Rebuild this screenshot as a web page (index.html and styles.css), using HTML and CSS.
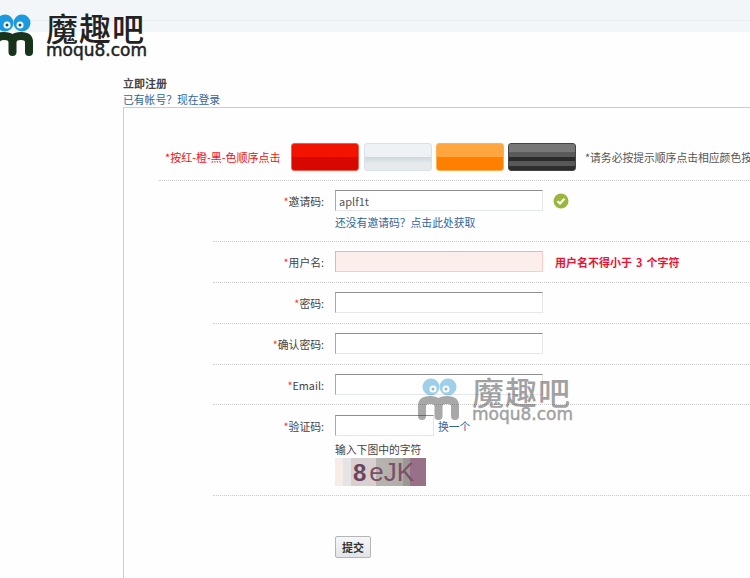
FILE: index.html
```html
<!DOCTYPE html>
<html lang="zh-CN">
<head>
    <meta charset="UTF-8">
    <title>立即注册 - 魔趣吧</title>
    <link rel="stylesheet" href="styles.css">
</head>
<body>

    <div class="topbar"></div>

    <div class="brand brand-top">
        <svg class="mascot" width="41" height="46" viewBox="0 0 41 46">
            <circle cx="13" cy="11" r="8.5" fill="#1b9ae0"/>
            <circle cx="30" cy="11" r="8.5" fill="#1b9ae0"/>
            <circle cx="15" cy="13" r="3.5" fill="#fff"/>
            <circle cx="28" cy="13" r="3.5" fill="#fff"/>
            <circle cx="15" cy="13" r="1.5" fill="#12507a"/>
            <circle cx="28" cy="13" r="1.5" fill="#12507a"/>
            <path d="M4 40V30Q4 24 12 24Q20.500 24 20.500 31V40M20.500 31Q20.500 24 29 24Q37 24 37 30V40" fill="none" stroke="#17331a" stroke-width="8" stroke-linecap="round"/>
        </svg>
        <div class="brand-text">
            <div class="brand-name">魔趣吧</div>
            <div class="brand-url">moqu8.com</div>
        </div>
    </div>

    <div class="content">
        <h3 class="title">立即注册</h3>
        <a class="link" href="#">已有帐号？现在登录</a>

        <div class="panel">
            <div class="color-row">
                <span class="color-tip">*按红-橙-黑-色顺序点击</span>
                <div class="color-btn btn-red"></div>
                <div class="color-btn btn-white"></div>
                <div class="color-btn btn-orange"></div>
                <div class="color-btn btn-black"></div>
                <span class="color-note">*请务必按提示顺序点击相应颜色按钮</span>
            </div>

            <div class="field field-invite">
                <label><em>*</em>邀请码:</label>
                <div class="control">
                    <div class="control-line">
                        <input class="text-input" type="text" value="aplf1t">
                        <svg class="ok-icon" width="16" height="16" viewBox="0 0 16 16">
                            <circle cx="8" cy="8" r="7.500" fill="#9ab63c"/>
                            <path d="M4.500 8.200L7 10.500L11.500 5.800" fill="none" stroke="#fff" stroke-width="2.200"/>
                        </svg>
                    </div>
                    <a class="link hint" href="#">还没有邀请码？点击此处获取</a>
                </div>
            </div>

            <div class="field">
                <label><em>*</em>用户名:</label>
                <div class="control-line">
                    <input class="text-input input-error" type="text">
                    <span class="error-msg">用户名不得小于 3 个字符</span>
                </div>
            </div>

            <div class="field">
                <label><em>*</em>密码:</label>
                <input class="text-input" type="password">
            </div>

            <div class="field">
                <label><em>*</em>确认密码:</label>
                <input class="text-input" type="text">
            </div>

            <div class="field field-email">
                <label><em>*</em>Email:</label>
                <input class="text-input" type="text">
            </div>

            <div class="field field-captcha">
                <label><em>*</em>验证码:</label>
                <div class="control">
                    <div class="control-line">
                        <input class="text-input input-short" type="text">
                        <a class="link" href="#">换一个</a>
                    </div>
                    <div class="captcha-tip">输入下图中的字符</div>
                    <div class="captcha"><b>8</b>eJK</div>
                </div>
            </div>

            <div class="submit-row">
                <button class="submit-btn">提交</button>
            </div>
        </div>
    </div>

    <div class="brand brand-mark">
        <svg class="mascot" width="41" height="46" viewBox="0 0 41 46">
            <circle cx="13" cy="11" r="8.5" fill="#1b8fd0"/>
            <circle cx="30" cy="11" r="8.5" fill="#1b8fd0"/>
            <circle cx="15" cy="13" r="3.5" fill="#fff"/>
            <circle cx="28" cy="13" r="3.5" fill="#fff"/>
            <circle cx="15" cy="13" r="1.5" fill="#12507a"/>
            <circle cx="28" cy="13" r="1.5" fill="#12507a"/>
            <path d="M4 40V30Q4 24 12 24Q20.500 24 20.500 31V40M20.500 31Q20.500 24 29 24Q37 24 37 30V40" fill="none" stroke="#333" stroke-width="8" stroke-linecap="round"/>
        </svg>
        <div class="brand-text">
            <div class="brand-name">魔趣吧</div>
            <div class="brand-url">moqu8.com</div>
        </div>
    </div>

</body>
</html>
```

FILE: styles.css
```css
html, body {
    margin: 0;
    padding: 0;
    height: 578px;
    overflow: hidden;
}
body {
    position: relative;
    background-color: #fefefe;
    color: #444;
    font-family: "Noto Sans CJK SC", sans-serif;
    font-size: 10.8px;
    line-height: 14px;
}
a {
    text-decoration: none;
}

/* header strip */
.topbar {
    height: 32px;
    background-color: #f3f6f9;
    background-image: linear-gradient(#f3f6f9 20px, #e8edf1 20px, #e8edf1 21px, #f3f6f9 21px);
}

/* logo, used twice */
.brand {
    position: absolute;
    display: flex;
    color: #222;
}
.brand-top {
    left: -8px;
    top: 12px;
}
.brand-mark {
    left: 418px;
    top: 376px;
    opacity: 0.42;
}
.mascot {
    flex: none;
    margin-right: 13px;
}
.brand-name {
    height: 30px;
    font-size: 32px;
    line-height: 30px;
    letter-spacing: 1px;
    font-weight: 500;
}
.brand-url {
    height: 17px;
    font-family: "DejaVu Sans", sans-serif;
    font-size: 17px;
    line-height: 17px;
    -webkit-text-stroke: 0.5px #222;
}

/* main area */
.content {
    padding: 44px 0 0 123px;
}
.title {
    margin: 0;
    height: 15px;
    color: #444;
    font-size: 11px;
    font-weight: 700;
    line-height: 14px;
}
.link {
    color: #336699;
}
.content > .link {
    display: block;
    height: 16px;
    line-height: 16px;
}
.panel {
    width: 800px;
    height: 480px;
    padding-left: 35px;
    border-top: 1px solid #ccc;
    border-left: 1px solid #ccc;
}

/* colour buttons */
.color-row {
    display: flex;
    align-items: center;
    height: 73px;
    box-sizing: border-box;
    padding: 35px 0 9px 6px;
    border-bottom: 1px dotted #ccc;
    white-space: nowrap;
}
.color-tip {
    width: 126px;
    color: #f01010;
    font-size: 11px;
}
.color-btn {
    flex: none;
    width: 68px;
    height: 28px;
    margin-right: 4px;
    border-radius: 3px;
    box-sizing: border-box;
}
.btn-red {
    margin-right: 5px;
    border: 1px solid #f55a4a;
    background: linear-gradient(#f31400 50%, #d60800 50%);
}
.btn-white {
    border: 1px solid #d8e2ea;
    background: linear-gradient(#eef2f6 50%, #ccd7df 50%, #e6eaed 75%);
}
.btn-orange {
    border: 1px solid #ffb050;
    background: linear-gradient(#ffa63e 50%, #ff7f00 50%);
}
.btn-black {
    border: 1px solid #444;
    background: linear-gradient(#777 30%, #5a5a5a 30%, #5a5a5a 50%, #2a2a2a 50%, #2a2a2a 65%, #585858 65%, #585858 85%, #2e2e2e 85%);
}
.color-note {
    margin-left: 5px;
    color: #555;
}

/* form rows */
.field {
    display: flex;
    margin-left: 54px;
    padding: 9px 0 10px;
    border-bottom: 1px dotted #ccc;
}
.field-invite {
    padding-bottom: 9px;
}
.field-email {
    padding-bottom: 9px;
}
.field-captcha {
    padding: 10px 0 9px;
}
.field label {
    flex: none;
    width: 111px;
    margin-right: 11px;
    height: 21px;
    line-height: 22px;
    text-align: right;
}
.field em {
    color: #f33;
    font-style: normal;
}
.control-line {
    display: flex;
    align-items: center;
}
.text-input {
    display: block;
    width: 208px;
    height: 21px;
    margin: 0;
    padding: 0 3px;
    box-sizing: border-box;
    color: #555;
    font-family: "Noto Sans CJK SC", sans-serif;
    font-size: 11px;
    background-color: #fff;
    border: 1px solid #e4e8ec;
    border-top-color: #8f8f8f;
    border-left-color: #a8a8a8;
    outline: none;
}
.input-short {
    width: 99px;
    margin-right: 4px;
}
.input-error {
    background-color: #fbeeeb;
    border-color: #fdcaca;
    border-top-color: #ffa8a8;
    border-left-color: #ffa8a8;
}
.ok-icon {
    margin-left: 10px;
}
.error-msg {
    margin-left: 12px;
    color: #f01030;
    font-size: 11px;
    font-weight: 700;
    word-spacing: 1.5px;
}
.hint {
    display: block;
    margin-top: 3px;
    height: 18px;
    line-height: 16px;
}
.captcha-tip {
    margin-top: 5px;
    height: 17px;
    line-height: 16px;
}
.captcha {
    width: 91px;
    height: 28px;
    padding-left: 18px;
    box-sizing: border-box;
    overflow: hidden;
    color: #7a4f68;
    font-family: "Liberation Sans", sans-serif;
    font-size: 26px;
    line-height: 28px;
    background: linear-gradient(90deg, #f8ece8 8px, #e4e4e4 8px, #e4e4e4 16px, #d8d0d0 16px, #d8d0d0 41px, #b8b4b0 41px, #b0aca8 68px, #9a9894 68px, #9a9894 75px, #987088 75px);
}
.captcha b {
    margin-right: 3px;
    color: #6b4560;
    font-size: 24px;
}
.submit-row {
    padding: 40px 0 0 176px;
}
.submit-btn {
    display: block;
    width: 36px;
    height: 22px;
    padding: 0;
    color: #333;
    font-family: "Noto Sans CJK SC", sans-serif;
    font-size: 11px;
    font-weight: 700;
    background: linear-gradient(#f4f6f8, #e2e4e6);
    border: 1px solid #b5b5b5;
    border-radius: 2px;
}
```
